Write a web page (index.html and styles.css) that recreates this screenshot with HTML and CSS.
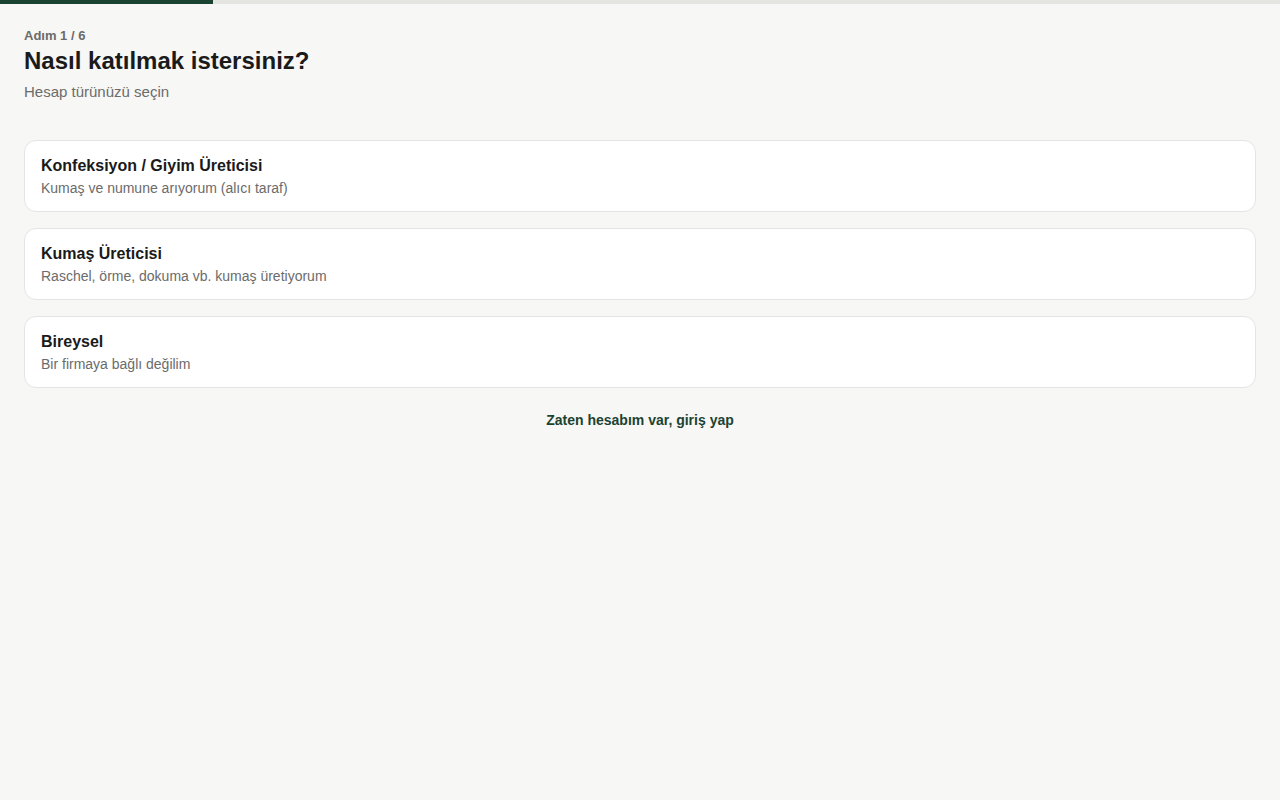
FILE: index.html
```html
<!DOCTYPE html>
<html lang="tr">
<head>
  <meta charset="UTF-8">
  <meta name="viewport" content="width=device-width, initial-scale=1.0">
  <title>Kayıt</title>
  <link rel="stylesheet" href="styles.css">
</head>
<body>
  <div class="progress">
    <div class="progress-fill"></div>
  </div>

  <main class="page">
    <div class="step">Adım 1 / 6</div>
    <h1>Nasıl katılmak istersiniz?</h1>
    <p class="subtitle">Hesap türünüzü seçin</p>

    <div class="options">
      <button class="option">
        <span class="option-title">Konfeksiyon / Giyim Üreticisi</span>
        <span class="option-desc">Kumaş ve numune arıyorum (alıcı taraf)</span>
      </button>
      <button class="option">
        <span class="option-title">Kumaş Üreticisi</span>
        <span class="option-desc">Raschel, örme, dokuma vb. kumaş üretiyorum</span>
      </button>
      <button class="option">
        <span class="option-title">Bireysel</span>
        <span class="option-desc">Bir firmaya bağlı değilim</span>
      </button>
    </div>

    <a class="login-link" href="#">Zaten hesabım var, giriş yap</a>
  </main>
</body>
</html>
```

FILE: styles.css
```css
body {
  margin: 0;
  background-color: #f7f7f5;
  color: #1a1a1a;
  font-family: "Liberation Sans", Arial, sans-serif;
}
.progress {
  height: 4px;
  background-color: #e4e4e1;
}
.progress-fill {
  width: 213px;
  height: 100%;
  background-color: #1b4332;
}
.page {
  padding: 24px 24px;
  display: flex;
  flex-direction: column;
}
.step {
  font-size: 13px;
  font-weight: bold;
  color: #6b6b6b;
}
h1 {
  font-size: 24px;
  margin: 4px 0 0;
  color: #1a1a1a;
}
.subtitle {
  font-size: 15px;
  color: #6b6b6b;
  margin: 8px 0 0;
}
.options {
  margin-top: 40px;
  display: flex;
  flex-direction: column;
  gap: 16px;
}
.option {
  display: flex;
  flex-direction: column;
  align-items: flex-start;
  gap: 5px;
  text-align: left;
  font-family: inherit;
  background-color: #ffffff;
  border: 1px solid #e4e4e0;
  border-radius: 12px;
  padding: 16px 16px 15px;
  cursor: pointer;
}
.option:hover {
  border-color: #1b4332;
}
.option-title {
  font-size: 16px;
  font-weight: bold;
  color: #1a1a1a;
}
.option-desc {
  font-size: 14px;
  color: #6b6b6b;
}
.login-link {
  align-self: center;
  margin-top: 24px;
  font-size: 14px;
  font-weight: bold;
  color: #1b4332;
  text-decoration: none;
}
```
